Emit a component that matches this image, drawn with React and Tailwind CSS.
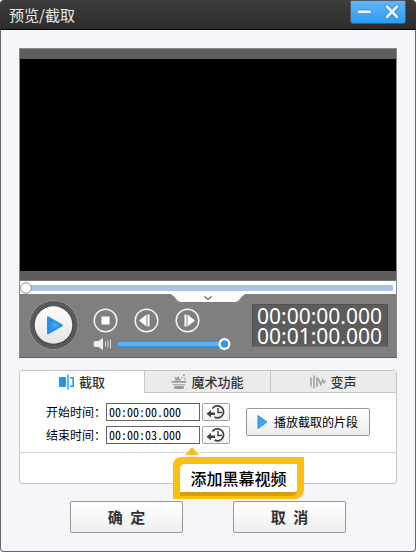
import React from "react";

const TABS = [
  { id: "clip", label: "截取", icon: ClipIcon },
  { id: "magic", label: "魔术功能", icon: HatIcon },
  { id: "voice", label: "变声", icon: VoiceIcon },
];

const TIMES = [
  { label: "开始时间：", value: "00:00:00.000" },
  { label: "结束时间：", value: "00:00:03.000" },
];

function ClipIcon() {
  return (
    <svg width="16" height="16" viewBox="0 0 16 16" fill="#1c97f7">
      <rect x="0" y="3" width="7" height="10" rx="1" />
      <rect x="8.3" y="0.5" width="1.4" height="15" />
      <path d="M11 3h4v10h-4v-1.6h2.4V4.6H11z" />
    </svg>
  );
}

function HatIcon() {
  return (
    <svg width="16" height="16" viewBox="0 0 16 16" fill="#9b9b9b">
      <path d="M0.5 7h14.5v1.8H0.5zM2 10.3h12v1H2zM3 12h10l-0.4 3H3.4z" />
      <path d="M3.2 2.5l2.6 1.2L8 1.8v2.5l2.7 2.2H3.6l1-1.8z" />
      <rect x="12" y="0.5" width="1.8" height="1.8" />
      <rect x="10" y="3" width="1.4" height="1.4" />
      <rect x="13" y="4" width="1.5" height="1.5" />
    </svg>
  );
}

function VoiceIcon() {
  return (
    <svg width="16" height="14" viewBox="0 0 16 14" fill="none" stroke="#a3a3a3" strokeWidth="1.6">
      <path d="M1 2.5v9M4 0.5v13M7 2v10" />
      <path d="M8.2 3.5l2.6 6 2-4.5 1.2 2.5 1.6-1.8" />
    </svg>
  );
}

function RestoreIcon() {
  return (
    <svg width="20" height="16" viewBox="0 0 20 16" fill="none" stroke="#424242">
      <path d="M6.5 4.6A6 6 0 1 1 8.6 13" strokeWidth="1.7" />
      <path d="M12 4v4.5h4" strokeWidth="1.5" />
      <path d="M0.5 9.8L5 6v2.6h4v2.4H5v2.6z" fill="#424242" stroke="none" />
    </svg>
  );
}

const TitleBar = () => (
  <div className="flex h-[30px] shrink-0 items-start justify-between rounded-t-sm border-b border-black bg-linear-to-b from-[#3e3e3e] to-[#2b2b2b] pl-[9px] pr-[10px]">
    <h1 className="pt-[3px] text-[15px] leading-[24px] text-[#e8e8e8]">预览/截取</h1>
    <div className="flex h-6 w-[56px] rounded-b-[3px] border border-[#4d5a66] bg-linear-to-b from-[#62b7f7] to-[#259cf5]">
      <svg width="54" height="22" viewBox="0 0 54 22">
        <rect x="6.3" y="9" width="14" height="3.6" rx="1.2" fill="#f0f0f0" stroke="#2c83c8" strokeWidth="0.7" />
        <path d="M36 5.5l10 10.5M46 5.5L36 16" stroke="#2c83c8" strokeWidth="4" strokeLinecap="round" />
        <path d="M36 5.5l10 10.5M46 5.5L36 16" stroke="#f0f0f0" strokeWidth="2.7" strokeLinecap="round" />
      </svg>
    </div>
  </div>
);

function PlayButton() {
  return (
    <svg width="52" height="52" viewBox="0 0 52 52">
      <defs>
        <pattern id="weave" width="3" height="3" patternUnits="userSpaceOnUse">
          <rect width="3" height="3" fill="#6b6b6b" />
          <path d="M0 0l3 3" stroke="#434343" strokeWidth="1.2" />
        </pattern>
        <linearGradient id="face" x1="0" y1="0" x2="0" y2="1">
          <stop offset="0" stopColor="#ffffff" />
          <stop offset="1" stopColor="#e4e4e4" />
        </linearGradient>
        <radialGradient id="blue">
          <stop offset="0" stopColor="#43adf8" />
          <stop offset="1" stopColor="#2287df" />
        </radialGradient>
      </defs>
      <circle cx="25.5" cy="26" r="24.5" fill="url(#weave)" stroke="#9a9a9a" strokeWidth="1" />
      <circle cx="25.5" cy="26" r="23.5" fill="none" stroke="#616161" />
      <circle cx="25.5" cy="26.3" r="19.8" fill="#484848" />
      <circle cx="25.5" cy="26" r="18.8" fill="url(#face)" />
      <path d="M20 18.3l14 8-14 8z" fill="url(#blue)" stroke="#2c91e6" strokeWidth="2" strokeLinejoin="round" />
    </svg>
  );
}

function RoundButton({ children }) {
  return (
    <svg width="25" height="25" viewBox="0 0 25 25" fill="#fff">
      <circle cx="12.5" cy="12.5" r="11.3" fill="none" stroke="#f3f3f3" strokeWidth="1.5" />
      {children}
    </svg>
  );
}

function Volume() {
  return (
    <div className="flex h-[14px] items-center">
      <svg width="24" height="14" viewBox="0 0 24 14">
        <path d="M3 4h2.5L10 1v12l-4.500-3H3q-2.500 0-2.500-3T3 4z" fill="#eeeeee" />
        <path d="M12.500 4.500v5M15 3.500v7M17.500 2.500v9" stroke="#dcdcdc" strokeWidth="1" />
      </svg>
      <svg width="116" height="14" viewBox="0 0 116 14">
        <rect x="0.5" y="4.500" width="106" height="5" rx="1.5" fill="#55b4fb" stroke="#2f93e2" />
        <circle cx="107.500" cy="7" r="6" fill="#fff" />
        <circle cx="107.500" cy="7" r="3.7" fill="#2d98ef" />
      </svg>
    </div>
  );
}

const Player = () => (
  <div className="flex h-[310px] flex-col border border-[#8b8b8b] border-b-[#5f5f5f] bg-[#5c5c5c] pt-2.5">
    <div className="h-[212px] bg-black" />
    <div className="h-2.5 border-b border-[#767676]" />
    <div className="flex h-[13px] items-center bg-white">
      <svg width="376" height="13" viewBox="0 0 376 13">
        <rect x="5" y="4" width="368" height="6" rx="1.500" fill="#acc3e5" />
        <circle cx="6" cy="7" r="5.300" fill="#fff" stroke="#8c8c8c" />
      </svg>
    </div>
    <div className="relative flex flex-1 bg-[#7f7f7f] pl-[8px] pr-2">
      <svg className="absolute left-[150px] top-0" width="76" height="9" viewBox="0 0 76 9">
        <path d="M0 0h76q-2 0-4 2.500l-4 4.500q-1 1-3 1H11q-2 0-3-1L4 2.500Q2 0 0 0z" fill="#fff" />
        <path d="M34.500 2.500l3.500 3 3.500-3" fill="none" stroke="#666" strokeWidth="1.300" />
      </svg>
      <div className="pt-[5px]">
        <PlayButton />
      </div>
      <div className="flex-1 pl-[13px] pt-[14px]">
        <div className="flex gap-4">
          <RoundButton>
            <rect x="8.500" y="8.500" width="8" height="8" />
          </RoundButton>
          <RoundButton>
            <path d="M5 12.500l7.500-6v12zM13.500 6.500h2v12h-2z" />
          </RoundButton>
          <RoundButton>
            <path d="M20 12.500l-7.500-6v12zM9.500 6.500h2v12h-2z" />
          </RoundButton>
        </div>
        <div className="pt-1">
          <Volume />
        </div>
      </div>
      <div className="mt-[10px] h-[43px] w-[136px] border border-[#515151] border-b-[#6c6c6c] bg-[#5c5c5c] pl-[4px] pt-px font-['Noto_Sans'] text-[21px] leading-5 text-white">
        <div>00:00:00.000</div>
        <div>00:01:00.000</div>
      </div>
    </div>
  </div>
);

const Tabs = () => (
  <div className="flex h-[22px]">
    {TABS.map(({ id, label, icon: Icon }, index) => (
      <div
        key={id}
        className={`flex items-center justify-center gap-1 text-[13px] text-[#333] ${
          index === 0
            ? "w-[124px] font-medium"
            : "w-[126px] border-b border-l border-[#c6c6c6] bg-[#ebebeb] font-medium"
        }`}
      >
        <Icon />
        <span className="leading-5">{label}</span>
      </div>
    ))}
  </div>
);

const ClipPanel = () => (
  <div className="relative h-[114px] rounded-[3px] border border-[#c6c6c6] bg-white">
    <Tabs />
    <div className="flex h-[60px] border-b border-[#dadada] pl-[26px] pt-[9px]">
      <div className="flex flex-col gap-1">
        {TIMES.map(({ label, value }) => (
          <div key={label} className="flex h-[19px] items-center text-xs text-black">
            <span className="w-[60px] leading-[19px]">{label}</span>
            <div className="h-[18px] w-[94px] border border-[#646464] pl-[2px] leading-4 [font-feature-settings:'hwid']">
              {value}
            </div>
            <button className="ml-[2px] flex h-[18px] w-7 items-center justify-center rounded-[2px] border border-[#a5a5a5] bg-linear-to-b from-white to-[#efefef]">
              <RestoreIcon />
            </button>
          </div>
        ))}
      </div>
      <button className="ml-4 mt-[6px] flex h-7 w-[124px] items-center rounded-[2px] border border-[#989898] bg-linear-to-b from-white to-[#ededed] pl-[10px] text-xs text-black">
        <svg width="17" height="16" viewBox="0 0 17 16">
          <path d="M1 1.500l9 6.500-9 6.500z" fill="#3ea4f4" stroke="#2a93e8" strokeLinejoin="round" />
        </svg>
        播放截取的片段
      </button>
    </div>

    {/* Callout under the end time */}
    <div className="absolute left-[153px] top-[76px]">
      <svg className="ml-3" width="14" height="8" viewBox="0 0 14 8">
        <path d="M7 0l7 8H0z" fill="#fdbf12" />
      </svg>
      <div className="mt-[2px] h-[42px] w-[131px] rounded-tl-lg rounded-br-[9px] bg-[#fdbf12] px-[7px] pt-[7px]">
        <div className="flex h-8 items-center justify-center rounded-tl-[5px] rounded-br-[5px] border-b-4 border-[#d99e0c] bg-white text-base font-medium text-black">
          添加黑幕视频
        </div>
      </div>
    </div>
  </div>
);

function DialogButton({ children }) {
  return (
    <button className="h-8 w-[113px] rounded-[2px] border border-[#989898] bg-linear-to-b from-white to-[#efefef] text-[15px] font-bold text-[#333] [word-spacing:4px]">
      {children}
    </button>
  );
}

export default function App() {
  return (
    <div className="flex h-[552px] w-[416px] flex-col bg-white font-['Noto_Sans_CJK_SC',sans-serif]">
      <TitleBar />
      <div className="flex-1 rounded-b-[4px] border border-t-0 border-[#666669] bg-[#f5f6f9] px-[18px] pt-[18px]">
        <Player />
        <div className="pt-3">
          <ClipPanel />
        </div>
        <div className="flex gap-[50px] pl-[51px] pt-[17px]">
          <DialogButton>确 定</DialogButton>
          <DialogButton>取 消</DialogButton>
        </div>
      </div>
    </div>
  );
}
